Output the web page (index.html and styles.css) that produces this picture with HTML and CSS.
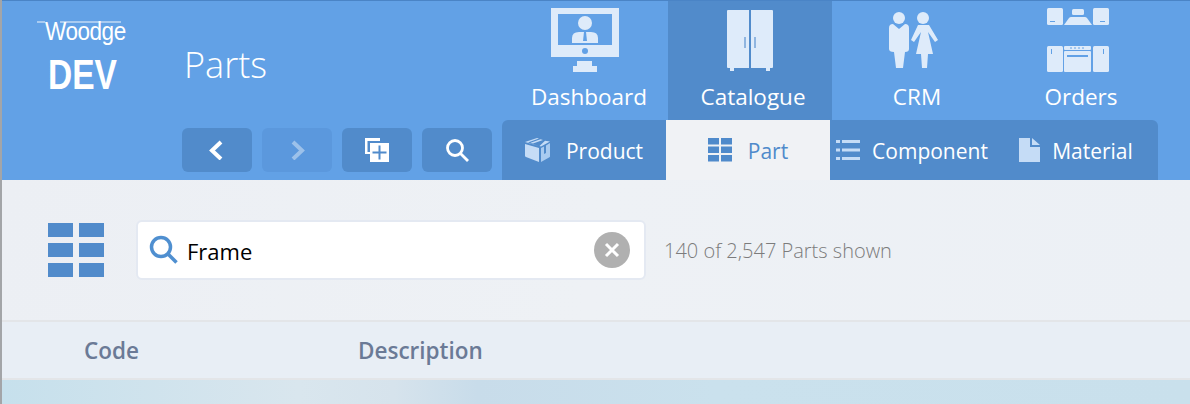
FILE: index.html
```html
<!DOCTYPE html>
<html lang="en">
<head>
    <meta charset="UTF-8">
    <title>Parts</title>
    <link rel="stylesheet" href="styles.css">
</head>
<body>
    <header class="header">
        <div class="brand">
            <div class="brand__logo">Woodge</div>
            <div class="brand__env">DEV</div>
        </div>
        <div class="header__main">
            <div class="header__top">
                <h1 class="title">Parts</h1>
                <nav class="nav">
                    <a class="nav__item">
                        <svg class="nav__icon" viewBox="0 0 80 76">
                            <path fill-rule="evenodd" d="M5 4H73V53H5ZM12 10V41H66V10Z"/>
                            <circle cx="39" cy="19" r="7"/>
                            <path d="M26 39V34Q26 28 33 28H45Q52 28 52 34V39Z"/>
                            <path class="nav__cut" d="M38 28H40L41 37H37Z"/>
                            <circle class="nav__cut" cx="39" cy="47" r="3"/>
                            <path d="M31 57H46V62H51V68H27V62H31Z"/>
                        </svg>
                        <span class="nav__label">Dashboard</span>
                    </a>
                    <a class="nav__item nav__item--active">
                        <svg class="nav__icon" viewBox="0 0 80 76">
                            <path d="M17 7Q17 6 18 6H39V64H18Q17 64 17 63Z"/>
                            <path d="M41 6H62Q63 6 63 7V63Q63 64 62 64H41Z"/>
                            <path d="M20 64H24V67H20ZM56 64H60V67H56Z"/>
                            <path class="nav__cut" d="M34 33H36V44H34ZM44 33H46V44H44Z"/>
                        </svg>
                        <span class="nav__label">Catalogue</span>
                    </a>
                    <a class="nav__item">
                        <svg class="nav__icon" viewBox="0 0 80 76">
                            <circle cx="25" cy="14" r="6"/>
                            <path d="M15 24Q15 20 19 20L25 25L31 20Q35 20 35 24V45Q35 48 31 48L29 64H22L20 48Q15 48 15 45Z"/>
                            <circle cx="49" cy="14" r="6"/>
                            <path d="M44 21H55L64 36L61 38L54 28L59 50H54L53 64H48L47 50H42L47 28L40 38L37 36Z"/>
                        </svg>
                        <span class="nav__label">CRM</span>
                    </a>
                    <a class="nav__item">
                        <svg class="nav__icon" viewBox="0 0 80 76">
                            <rect x="9" y="4" width="16" height="17" rx="1.500"/>
                            <rect x="55" y="4" width="16" height="17" rx="1.500"/>
                            <rect x="34" y="5" width="12" height="6" rx="1.500"/>
                            <path d="M33 13H47Q48 13 49 14L54 21H26L31 14Q32 13 33 13Z"/>
                            <rect x="9" y="42" width="16" height="26" rx="1.500"/>
                            <rect x="55" y="42" width="16" height="26" rx="1.500"/>
                            <rect x="26" y="42" width="27" height="4" rx="1"/>
                            <rect x="26" y="47" width="27" height="21" rx="1"/>
                            <path class="nav__cut" d="M12 17H17V18H12ZM62 17H67V18H62ZM13 45H14V50H13ZM65 45H66V50H65ZM29 51H50V53H29ZM32 43.500H34V44.500H32ZM36 43.500H38V44.500H36ZM40 43.500H42V44.500H40ZM44 43.500H46V44.500H44Z"/>
                        </svg>
                        <span class="nav__label">Orders</span>
                    </a>
                </nav>
            </div>
            <div class="header__bottom">
                <div class="actions">
                    <button class="action">
                        <svg width="20" height="20" viewBox="0 0 20 20"><path class="stroke-white" d="M14 2L5 10.500L14 19"/></svg>
                    </button>
                    <button class="action action--disabled">
                        <svg width="20" height="20" viewBox="0 0 20 20"><path class="stroke-white" d="M6 2L15 10.500L6 19"/></svg>
                    </button>
                    <button class="action">
                        <svg width="26" height="26" viewBox="0 0 26 26">
                            <path class="fill-white" d="M1 1H16V4H3.500V15H6V17H1Z"/>
                            <rect class="fill-white" x="6" y="6" width="19" height="19"/>
                            <path class="fill-dark" d="M14.500 8.500H16.500V14.500H22.500V16.500H16.500V22.500H14.500V16.500H8.500V14.500H14.500Z"/>
                        </svg>
                    </button>
                    <button class="action">
                        <svg width="26" height="26" viewBox="0 0 26 26"><circle class="stroke-thin" cx="11" cy="11" r="7.500"/><path class="stroke-thin" d="M16.500 16.500L24 24"/></svg>
                    </button>
                </div>
                <div class="tabs">
                    <a class="tab">
                        <svg class="tab__icon" width="25" height="24" viewBox="0 0 25 24">
                            <path d="M0 6L14 10V24L1 19Q0 18.500 0 18Z"/>
                            <path class="tab__shade" d="M16 10L19 8.500V16L21 15V7.500L25 5V18.500Q25 19 24 19.500L16 24Z"/>
                            <path d="M0 4L12 0L14 .6L3 4.500L14 8ZM15.500 1.200L18 2L8 5.500L5.500 4.700ZM20 2.700L25 3.500L16 8.500L14.500 8Z"/>
                        </svg>
                        <span class="tab__gap">Product</span>
                    </a>
                    <a class="tab tab--active">
                        <svg class="tab__icon" width="24" height="24" viewBox="0 0 24 24">
                            <path d="M0 0H11V6.500H0ZM13 0H24V6.500H13ZM0 8.500H11V15H0ZM13 8.500H24V15H13ZM0 17H11V23.500H0ZM13 17H24V23.500H13Z"/>
                        </svg>
                        <span class="tab__gap">Part</span>
                    </a>
                    <a class="tab">
                        <svg class="tab__icon" width="24" height="20" viewBox="0 0 24 20">
                            <path d="M0 0H4V3H0ZM6 0H24V3H6ZM0 8.500H4V11.500H0ZM6 8.500H24V11.500H6ZM0 17H4V20H0ZM6 17H24V20H6Z"/>
                        </svg>
                        <span>Component</span>
                    </a>
                    <a class="tab">
                        <svg class="tab__icon" width="21" height="24" viewBox="0 0 21 24">
                            <path d="M0 0H11V9H21V24H0ZM13 0L21 7H13Z"/>
                        </svg>
                        <span>Material</span>
                    </a>
                </div>
            </div>
        </div>
    </header>

    <section class="toolbar">
        <svg class="toolbar__grid" width="56" height="54" viewBox="0 0 56 54">
            <path d="M0 0H25V14H0ZM31 0H56V14H31ZM0 20H25V34H0ZM31 20H56V34H31ZM0 40H25V54H0ZM31 40H56V54H31Z"/>
        </svg>
        <div class="search">
            <svg class="search__icon" width="30" height="30" viewBox="0 0 30 30">
                <circle cx="12" cy="12" r="9.500"/>
                <path d="M18.500 18.500L27.500 27.500"/>
            </svg>
            <span class="search__text">Frame</span>
            <button class="search__clear">
                <svg width="16" height="16" viewBox="0 0 16 16"><path d="M2 2L14 14M14 2L2 14"/></svg>
            </button>
        </div>
        <div class="count">140 of 2,547 Parts shown</div>
    </section>

    <div class="columns">
        <div class="columns__code">Code</div>
        <div>Description</div>
    </div>

    <div class="backdrop"></div>
</body>
</html>
```

FILE: styles.css
```css
* {
    box-sizing: border-box;
}
html, body {
    margin: 0;
    height: 100%;
    overflow: hidden;
}
body {
    display: flex;
    flex-direction: column;
    border-left: 2px solid #a3a5a8;
    background-color: #edf0f5;
    font-family: "Open Sans", "Noto Sans", sans-serif;
}

/* header */
.header {
    display: flex;
    flex: 0 0 180px;
    border-top: 1px solid #4a84c6;
    background-color: #62a1e6;
    color: #fff;
}
.brand {
    position: relative;
    flex: 0 0 180px;
    padding: 15px 0 0 43px;
    font-family: "Liberation Sans", sans-serif;
}
.brand::before {
    content: "";
    position: absolute;
    top: 20px;
    left: 35px;
    width: 84px;
    height: 2px;
    background: linear-gradient(90deg, rgba(255, 255, 255, .45) 8px, transparent 8px 23px, rgba(255, 255, 255, .45) 23px);
}
.brand__logo {
    font-size: 25px;
    line-height: 30px;
    letter-spacing: -0.5px;
    transform: scaleX(.9);
    transform-origin: left;
}
.brand__env {
    margin: 3px 0 0 3px;
    font-size: 43px;
    font-weight: 700;
    line-height: 50px;
    transform: scaleX(.78);
    transform-origin: left;
}
.header__main {
    display: flex;
    flex: 1;
    flex-direction: column;
}
.header__top {
    display: flex;
    flex: 0 0 119px;
    justify-content: space-between;
}
.title {
    margin: 39px 0 0 2px;
    font-size: 36px;
    font-weight: 300;
    line-height: 50px;
}
.nav {
    display: flex;
    margin-right: 30px;
}
.nav__item {
    display: flex;
    flex-direction: column;
    align-items: center;
    width: 164px;
    padding-top: 3px;
    font-size: 22.500px;
    line-height: 32px;
}
.nav__label {
    margin: 1px 0 0 6px;
}
.nav__item--active {
    background-color: #518bcb;
}
.nav__icon {
    display: block;
    width: 80px;
    height: 76px;
    fill: #deebfa;
}
.nav__cut {
    fill: #62a1e6;
}
.nav__item--active .nav__cut {
    fill: #8fb5e0;
}
.header__bottom {
    display: flex;
    flex: 1;
    gap: 10px;
    padding-right: 32px;
}
.actions {
    display: flex;
    gap: 10px;
    padding-top: 8px;
}
.action {
    display: flex;
    align-items: center;
    justify-content: center;
    width: 70px;
    height: 44px;
    padding: 0;
    border: 0;
    border-radius: 6px;
    background-color: #518bcb;
}
.action--disabled {
    background-color: #5b98dd;
}
.action--disabled svg {
    opacity: .4;
}
.stroke-white {
    fill: none;
    stroke: #fff;
    stroke-width: 4;
}
.stroke-thin {
    fill: none;
    stroke: #fff;
    stroke-width: 2.800;
}
.fill-white {
    fill: #fff;
}
.fill-dark {
    fill: #518bcb;
}
.tabs {
    display: flex;
    flex: 1;
    overflow: hidden;
    border-radius: 6px 6px 0 0;
    background-color: #518bcb;
}
.tab {
    display: flex;
    align-items: center;
    justify-content: center;
    gap: 12px;
    width: 164px;
    font-size: 21px;
    line-height: 58px;
}
.tab span {
    padding-top: 2px;
}
.tab__gap {
    margin-left: 4px;
}
.tab__icon {
    fill: #c5dcf6;
}
.tab__shade {
    fill: #a9cbf0;
}
.tab--active {
    background-color: #f0f2f5;
    color: #4f8acb;
}
.tab--active .tab__icon {
    fill: #4f8acb;
}

/* toolbar */
.toolbar {
    display: flex;
    flex: 0 0 142px;
    align-items: center;
    border-bottom: 2px solid #e3e5e8;
    background: linear-gradient(100deg, #eceff4, #eef1f5 50%, #ecf0f5);
}
.toolbar__grid {
    margin: 0 33px 0 46px;
    fill: #518bcb;
}
.search {
    display: flex;
    align-items: center;
    width: 510px;
    height: 60px;
    margin-left: -1px;
    padding: 0 14px 0 11px;
    border: 2px solid #e4e9f2;
    border-radius: 6px;
    background-color: #fff;
}
.search__icon {
    fill: none;
    stroke: #4f8fd0;
    stroke-width: 3.500;
}
.search__text {
    flex: 1;
    margin-left: 8px;
    padding-top: 2px;
    color: #000;
    font-size: 22px;
}
.search__clear {
    display: flex;
    align-items: center;
    justify-content: center;
    width: 36px;
    height: 36px;
    padding: 0;
    border: 0;
    border-radius: 50%;
    background-color: #b0b0b0;
}
.search__clear svg {
    fill: none;
    stroke: #fff;
    stroke-width: 3;
}
.count {
    margin-left: 18px;
    color: #7c7c7c;
    font-size: 20px;
    font-weight: 300;
}

/* table head */
.columns {
    display: flex;
    flex: 0 0 58px;
    align-items: center;
    padding: 1px 0 0 82px;
    border-bottom: 2px solid #e3e5e8;
    background-color: #e8eef5;
    color: #6b7a96;
    font-size: 22.500px;
    font-weight: 600;
}
.columns__code {
    width: 274px;
}
.backdrop {
    flex: 1;
    background: linear-gradient(90deg, #c6e0ec, #d9e6ee 25%, #d6e3ec 33%, #c8dcea 40%, #cae1ed 60%, #c9e0ec);
}
```
